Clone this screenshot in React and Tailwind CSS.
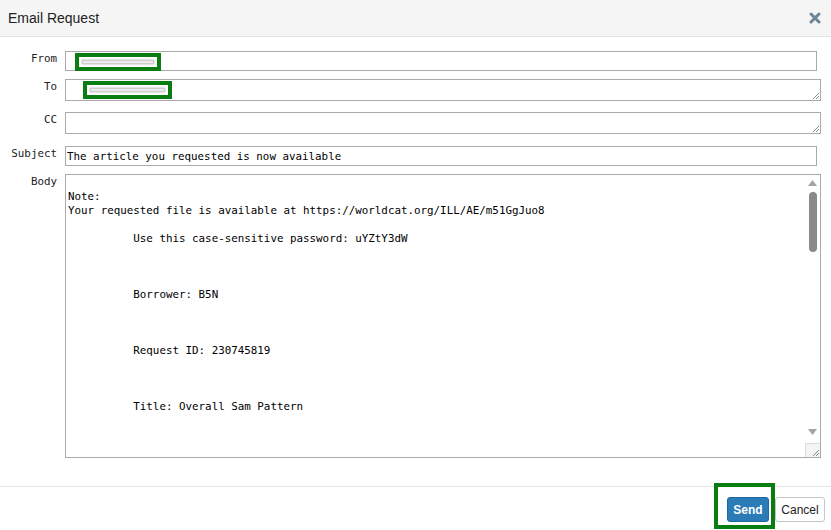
import React from "react";

const mono = { fontFamily: '"DejaVu Sans Mono", "Liberation Mono", monospace' };

const bodyText = `
Note:
Your requested file is available at https://worldcat.org/ILL/AE/m51GgJuo8

          Use this case-sensitive password: uYZtY3dW



          Borrower: B5N



          Request ID: 230745819



          Title: Overall Sam Pattern


`;

function Grip() {
  return (
    <svg width="9" height="9" viewBox="0 0 9 9" className="text-[#888]">
      <path d="M8 2 L2 8 M8 5 L5 8" stroke="currentColor" strokeWidth="1" />
    </svg>
  );
}

function Redacted({ w, inset }) {
  return (
    <div className={`absolute ${inset} border-[4px] border-[#0a7d12] px-[3px] py-[3px]`}>
      <div className={`${w} h-[4px] bg-[#ececec] border border-[#cfcfcf] shadow-[0_0_2px_#999]`} />
    </div>
  );
}

export default function App() {
  return (
    <div className="w-[831px] h-[530px] bg-white flex flex-col overflow-hidden" style={{ fontFamily: '"Liberation Sans", Arial, sans-serif' }}>
      {/* header */}
      <div className="h-[37px] shrink-0 bg-[#f5f5f5] border-b border-[#e3e3e3] flex items-center justify-between pl-[8px] pr-[10px]">
        <span className="text-[14px] text-[#222]">Email Request</span>
        <svg width="12" height="12" viewBox="0 0 12 12">
          <path d="M2 2 L10 10 M10 2 L2 10" stroke="#6e8593" strokeWidth="3" strokeLinecap="round" />
        </svg>
      </div>

      {/* form */}
      <div className="flex-1 flex flex-col pt-[14px] text-[10.85px] text-[#222]" style={mono}>
        <div className="flex">
          <label className="w-[57px] text-right">From</label>
          <div className="relative ml-[8px] w-[752px] h-[20px] border border-[#aaa]">
            <Redacted w="w-[72px]" inset="left-[9px] top-[1px]" />
          </div>
        </div>

        <div className="flex mt-[8px]">
          <label className="w-[57px] text-right">To</label>
          <div className="relative ml-[8px] w-[756px] h-[22px] border border-[#aaa] flex items-end justify-end">
            <Redacted w="w-[75px]" inset="left-[17px] top-[1px]" />
            <Grip />
          </div>
        </div>

        <div className="flex mt-[11px]">
          <label className="w-[57px] text-right">CC</label>
          <div className="ml-[8px] w-[756px] h-[22px] border border-[#aaa] flex items-end justify-end">
            <Grip />
          </div>
        </div>

        <div className="flex mt-[12px]">
          <label className="w-[57px] text-right">Subject</label>
          <div className="ml-[8px] w-[752px] h-[20px] border border-[#aaa] px-[1px] leading-[19px] text-black">
            The article you requested is now available
          </div>
        </div>

        <div className="flex mt-[8px]">
          <label className="w-[57px] text-right">Body</label>
          <div className="ml-[8px] w-[756px] h-[284px] border border-[#aaa] flex">
            <pre className="flex-1 m-0 pl-[2px] pt-[1px] leading-[14px] text-black overflow-hidden" style={mono}>
              {bodyText}
            </pre>
            <div className="w-[15px] flex flex-col items-center">
              <svg width="9" height="6" viewBox="0 0 9 6" className="mt-[5px]">
                <path d="M4.5 0 L9 6 L0 6 Z" fill="#a3a3a3" />
              </svg>
              <div className="mt-[6px] w-[8px] h-[60px] rounded-full bg-[#8a8a8a]" />
              <div className="flex-1" />
              <svg width="9" height="6" viewBox="0 0 9 6" className="mb-[8px]">
                <path d="M0 0 L9 0 L4.5 6 Z" fill="#a3a3a3" />
              </svg>
              <div className="w-[15px] h-[14px] bg-[#f5f5f5] border-l border-t border-[#dcdcdc] flex items-end justify-end">
                <Grip />
              </div>
            </div>
          </div>
        </div>
      </div>

      {/* footer */}
      <div className="h-[44px] shrink-0 border-t border-[#e5e5e5] flex items-center justify-end pr-[6px] gap-[6px] pt-[2px]">
        <div className="relative">
          <div className="absolute -left-[13px] -top-[14px] w-[61px] h-[46px] border-[4px] border-[#0a7d12]" />
          <button className="h-[25px] w-[42px] rounded-[3px] bg-[#2a7bb6] border border-[#1f6aa0] text-white font-bold text-[12px]">
            Send
          </button>
        </div>
        <button className="h-[25px] w-[50px] rounded-[3px] bg-white border border-[#c7c7c7] text-[#222] text-[12px]">
          Cancel
        </button>
      </div>
    </div>
  );
}
